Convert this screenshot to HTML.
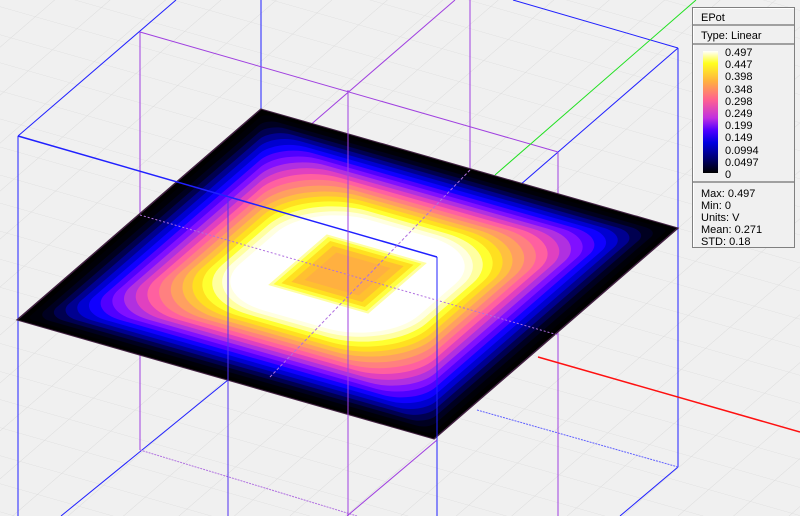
<!DOCTYPE html>
<html><head><meta charset="utf-8"><style>
html,body{margin:0;padding:0;width:800px;height:516px;overflow:hidden;background:#f0f0f0}
#lg{position:absolute;left:692px;top:7px;width:101px;height:239px;background:#f0f0f0;border:1px solid #808080;font-family:"Liberation Sans",sans-serif;font-size:11px;color:#000;box-shadow:1px 1px 0 #fff inset}
.r{position:absolute;left:0;right:0;border-bottom:2px solid #a0a0a0}
.t{position:absolute;left:8px;line-height:12px}
.v{position:absolute;left:32px;line-height:12.2px}
</style></head><body>
<svg width="800" height="516" style="position:absolute;left:0;top:0">
<defs>
<pattern id="g" width="10" height="10" patternUnits="userSpaceOnUse" patternTransform="matrix(4.17,1.19,-2.44,2.11,261,109)">
<path d="M0 0H10M0 0V10" stroke="#dadada" stroke-width="0.25" fill="none"/>
</pattern>
</defs>
<rect width="800" height="516" fill="#f0f0f0"/>
<rect width="800" height="516" fill="url(#g)"/>
<g fill="none" stroke-width="1">
<line x1="261" y1="0" x2="261" y2="109" stroke="#2020ff"/>
<line x1="176" y1="0" x2="18" y2="136" stroke="#2020ff"/>
<line x1="513" y1="0" x2="678" y2="48" stroke="#2020ff"/>
<line x1="678" y1="48" x2="437" y2="257" stroke="#2020ff"/>
<line x1="678" y1="48" x2="678" y2="467" stroke="#2020ff"/>
<line x1="678" y1="467" x2="620" y2="516" stroke="#2020ff"/>
<line x1="477" y1="410" x2="678" y2="467" stroke="#6060ff" stroke-dasharray="2,1"/>
<line x1="18" y1="136" x2="18" y2="516" stroke="#2020ff"/>
<line x1="61" y1="516" x2="228" y2="380" stroke="#2020ff"/>
<line x1="140" y1="32" x2="140" y2="450" stroke="#a040e0"/>
<line x1="140" y1="32" x2="558" y2="152" stroke="#a040e0"/>
<line x1="558" y1="152" x2="558" y2="516" stroke="#a040e0"/>
<line x1="455" y1="0" x2="227" y2="197" stroke="#a040e0"/>
<line x1="470" y1="0" x2="470" y2="170" stroke="#a040e0"/>
<line x1="140" y1="450" x2="357" y2="516" stroke="#b070e0" stroke-dasharray="2,1"/>
<line x1="495" y1="175" x2="696" y2="0" stroke="#20e020"/>
<line x1="538" y1="357" x2="800" y2="432" stroke="#ff1010" stroke-width="1.5"/>
</g>
<g transform="matrix(4.17,1.19,-2.44,2.11,261,109)">
<rect x="0" y="0" width="100" height="100" fill="#000"/>
<rect x="1.5" y="1.5" width="97" height="97" rx="1.5" fill="#000008"/>
<rect x="3" y="3" width="94" height="94" rx="3" fill="#000020"/>
<rect x="4.5" y="4.5" width="91" height="91" rx="4" fill="#000050"/>
<rect x="6" y="6" width="88" height="88" rx="5" fill="#000090"/>
<rect x="7.5" y="7.5" width="85" height="85" rx="6" fill="#0000d0"/>
<rect x="9" y="9" width="82" height="82" rx="7" fill="#1000ff"/>
<rect x="10.5" y="10.5" width="79" height="79" rx="8" fill="#5000ff"/>
<rect x="12" y="12" width="76" height="76" rx="9" fill="#8010ff"/>
<rect x="13.5" y="13.5" width="73" height="73" rx="10" fill="#b030e0"/>
<rect x="15" y="15" width="70" height="70" rx="11" fill="#e040c0"/>
<rect x="16.5" y="16.5" width="67" height="67" rx="12" fill="#ff60a0"/>
<rect x="18" y="18" width="64" height="64" rx="13" fill="#ff8080"/>
<rect x="19.5" y="19.5" width="61" height="61" rx="14" fill="#ffa060"/>
<rect x="21" y="21" width="58" height="58" rx="15" fill="#ffc040"/>
<rect x="22.5" y="22.5" width="55" height="55" rx="15" fill="#ffe020"/>
<rect x="24" y="24" width="52" height="52" rx="15" fill="#ffff30"/>
<rect x="25.5" y="25.5" width="49" height="49" rx="15" fill="#ffffa0"/>
<rect x="27" y="27" width="46" height="46" rx="15" fill="#ffffe0"/>
<rect x="28.5" y="28.5" width="43" height="43" rx="14" fill="#ffffff"/>
<rect x="38" y="38" width="24" height="24" fill="#ffffa0"/>
<rect x="38.8" y="38.8" width="22.4" height="22.4" fill="#ffff40"/>
<rect x="40" y="40" width="20" height="20" fill="#ffe020"/>
<rect x="41.5" y="41.5" width="17" height="17" fill="#ffc030"/>
<rect x="43.5" y="43.5" width="13" height="13" fill="#ffb040"/>
<rect x="0" y="0" width="100" height="100" fill="none" stroke="#402040" stroke-width="0.4"/>
</g>
<g fill="none" stroke-width="1">
<line x1="18" y1="136" x2="437" y2="257" stroke="#2020ff" stroke-width="1.5"/>
<line x1="437" y1="257" x2="437" y2="516" stroke="#2020ff"/>
<line x1="228" y1="197" x2="228" y2="516" stroke="#5030f0"/>
<line x1="348" y1="90" x2="348" y2="516" stroke="#a040e0"/>
<line x1="140" y1="215" x2="558" y2="335" stroke="#b070e0" stroke-dasharray="2,2"/>
<line x1="470" y1="170" x2="270" y2="377" stroke="#b070e0" stroke-dasharray="3,2"/>
<line x1="437" y1="440" x2="347" y2="516" stroke="#a040e0"/>
</g>
</svg>
<div id="lg">
<div class="t" style="top:4px">EPot</div>
<div class="r" style="top:16px"></div>
<div class="t" style="top:22px">Type: Linear</div>
<div class="r" style="top:35px"></div>
<div style="position:absolute;left:10px;top:43px;width:15px;height:122px;background:linear-gradient(to bottom,#ffffff 0%,#ffff20 10%,#ffb040 25%,#ff6090 40%,#c030e0 55%,#5000ff 65%,#0000e0 75%,#000070 88%,#000000 100%)"></div>
<div class="v" style="top:39px">0.497<br>0.447<br>0.398<br>0.348<br>0.298<br>0.249<br>0.199<br>0.149<br>0.0994<br>0.0497<br>0</div>
<div class="r" style="top:173px"></div>
<div class="t" style="top:180px">Max: 0.497<br>Min: 0<br>Units: V<br>Mean: 0.271<br>STD: 0.18</div>
</div>
</body></html>
